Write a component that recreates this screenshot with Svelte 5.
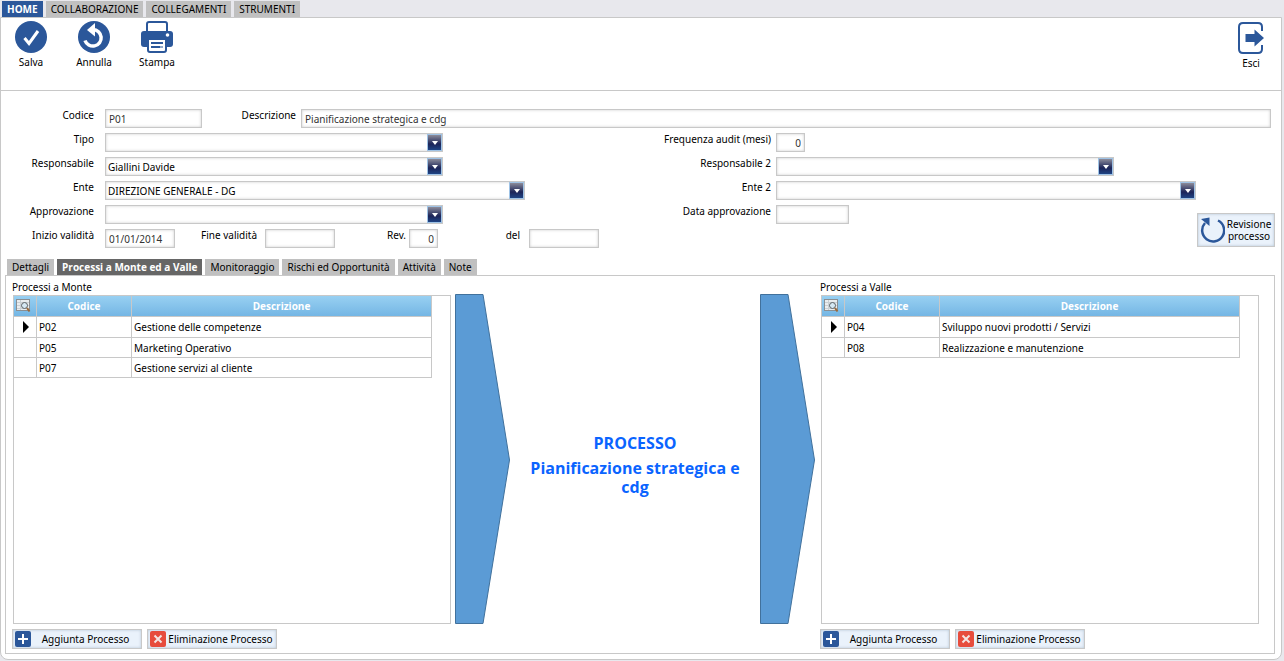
<script lang="ts">
	type Process = { code: string; description: string };

	const menu = ['HOME', 'COLLABORAZIONE', 'COLLEGAMENTI', 'STRUMENTI'];
	const tabs = ['Dettagli', 'Processi a Monte ed a Valle', 'Monitoraggio', 'Rischi ed Opportunità', 'Attività', 'Note'];

	const upstream: Process[] = [
		{ code: 'P02', description: 'Gestione delle competenze' },
		{ code: 'P05', description: 'Marketing Operativo' },
		{ code: 'P07', description: 'Gestione servizi al cliente' }
	];
	const downstream: Process[] = [
		{ code: 'P04', description: 'Sviluppo nuovi prodotti / Servizi' },
		{ code: 'P08', description: 'Realizzazione e manutenzione' }
	];

	let activeMenu = $state('HOME');
	let activeTab = $state('Processi a Monte ed a Valle');
	let description = $state('Pianificazione strategica e cdg');
</script>

{#snippet combo(id: string, value: string, wide: boolean)}
	<div class="combo" class:wide>
		<select {id}>
			<option>{value}</option>
		</select>
		<span class="combo-arrow"></span>
	</div>
{/snippet}

{#snippet arrow()}
	<div class="arrow">
		<svg viewBox="0 0 55 330" preserveAspectRatio="none" aria-hidden="true">
			<polygon points="0.5,0.5 28,0.5 54.5,166 28,329.5 0.5,329.5" fill="#5b9bd5" stroke="#41719c" vector-effect="non-scaling-stroke" />
		</svg>
	</div>
{/snippet}

{#snippet processList(title: string, rows: Process[])}
	<h2>{title}</h2>
	<div class="grid-box">
		<table>
			<thead>
				<tr>
					<th class="col-mark">
						<button class="search" aria-label="Cerca">
							<svg width="15" height="14" viewBox="0 0 15 14">
								<rect x="0.5" y="0.5" width="13" height="11" fill="#e9edef" stroke="#8a8f93" />
								<path d="M1 3.5h12M1 6.5h12M1 9.5h12M4.5 1v10" stroke="#c9d0d4" fill="none" />
								<circle cx="8.5" cy="6.5" r="3" fill="#d5e8f3" stroke="#5b6165" />
								<path d="M11 9l2.5 3.5" stroke="#9a6a3c" stroke-width="2" />
							</svg>
						</button>
					</th>
					<th class="col-code">Codice</th>
					<th>Descrizione</th>
				</tr>
			</thead>
			<tbody>
				{#each rows as row, i (row.code)}
					<tr>
						<td class="mark">
							{#if i === 0}
								<svg width="6" height="12" viewBox="0 0 6 12"><path d="M0 0l6 6-6 6z" /></svg>
							{/if}
						</td>
						<td>{row.code}</td>
						<td>{row.description}</td>
					</tr>
				{/each}
			</tbody>
		</table>
	</div>
	<div class="actions">
		<button class="push">
			<svg width="16" height="16" viewBox="0 0 16 16">
				<rect width="16" height="16" rx="2" fill="#2b579a" />
				<path d="M8 3v10M3 8h10" stroke="#fff" stroke-width="2" />
			</svg>
			<span>Aggiunta Processo</span>
		</button>
		<button class="push">
			<svg width="16" height="16" viewBox="0 0 16 16">
				<rect width="16" height="16" rx="2" fill="#e74c3c" />
				<path d="M4.5 4.5l7 7M11.5 4.5l-7 7" stroke="#f4e4e2" stroke-width="2" />
			</svg>
			<span>Eliminazione Processo</span>
		</button>
	</div>
{/snippet}

<div class="page">
	<nav class="menu">
		{#each menu as item (item)}
			<button class:active={item === activeMenu} onclick={() => (activeMenu = item)}>{item}</button>
		{/each}
	</nav>

	<main>
		<div class="toolbar">
			<button>
				<svg width="32" height="32" viewBox="0 0 32 32">
					<circle cx="16" cy="16" r="16" fill="#2b579a" />
					<path d="M9.5 17l4.5 5.5L23 10" fill="none" stroke="#fff" stroke-width="3" />
				</svg>
				Salva
			</button>
			<button>
				<svg width="32" height="32" viewBox="0 0 32 32">
					<circle cx="16" cy="16" r="16" fill="#2b579a" />
					<path d="M15 8.5a8.3 8.3 0 1 1-8 11" fill="none" stroke="#fff" stroke-width="3.5" />
					<path d="M9 9l8-7v13.5z" fill="#fff" />
				</svg>
				Annulla
			</button>
			<button>
				<svg width="32" height="32" viewBox="0 0 32 32">
					<path d="M6 12V3q0-2 2-2h16q2 0 2 2v9" fill="#fff" stroke="#2b579a" stroke-width="2" />
					<rect y="10" width="32" height="16" rx="3" fill="#2b579a" />
					<circle cx="26.5" cy="14" r="1.8" fill="#fff" />
					<path d="M7 18h18v11q0 2-2 2H9q-2 0-2-2z" fill="#fff" stroke="#2b579a" stroke-width="2" />
					<path d="M10 22h12" stroke="#2b579a" stroke-width="2" />
					<path d="M10 26h9" stroke="#2b579a" stroke-width="2" />
					<path d="M19 26h3" stroke="#8fa9cc" stroke-width="2" />
				</svg>
				Stampa
			</button>
			<button class="exit">
				<svg width="28" height="32" viewBox="0 0 28 32">
					<path d="M25 9V5q0-4-4-4H6q-4 0-4 4v22q0 4 4 4h15q4 0 4-4v-4" fill="none" stroke="#2b579a" stroke-width="2" />
					<path d="M8.5 12h9V7.5l9.500 8.500-9.500 8.500V20h-9z" fill="#2b579a" />
				</svg>
				Esci
			</button>
		</div>

		<form class="details" onsubmit={(e) => e.preventDefault()}>
			<div class="row full">
				<label for="code">Codice</label>
				<input id="code" class="w-code" value="P01" />
				<label for="description" class="l-desc">Descrizione</label>
				<input id="description" class="w-fill" bind:value={description} />
			</div>

			<div class="row">
				<label for="type">Tipo</label>
				{@render combo('type', '', false)}
			</div>
			<div class="row right">
				<label for="frequency">Frequenza audit (mesi)</label>
				<input id="frequency" class="w-number" value="0" />
			</div>

			<div class="row">
				<label for="owner">Responsabile</label>
				{@render combo('owner', 'Giallini Davide', false)}
			</div>
			<div class="row right">
				<label for="owner2">Responsabile 2</label>
				{@render combo('owner2', '', false)}
			</div>

			<div class="row">
				<label for="unit">Ente</label>
				{@render combo('unit', 'DIREZIONE GENERALE - DG', true)}
			</div>
			<div class="row right">
				<label for="unit2">Ente 2</label>
				{@render combo('unit2', '', true)}
			</div>

			<div class="row">
				<label for="approval">Approvazione</label>
				{@render combo('approval', '', false)}
			</div>
			<div class="row right approved">
				<label for="approval-date">Data approvazione</label>
				<input id="approval-date" class="w-approval" />
			</div>

			<div class="row">
				<label for="valid-from">Inizio validità</label>
				<input id="valid-from" class="w-date" value="01/01/2014" />
				<label for="valid-to" class="l-to">Fine validità</label>
				<input id="valid-to" class="w-date" />
				<label for="revision" class="l-rev">Rev.</label>
				<input id="revision" class="w-number" value="0" />
				<label for="revision-date" class="l-of">del</label>
				<input id="revision-date" class="w-date" />
			</div>

			<button class="push revise">
				<svg width="25" height="26" viewBox="0 0 25 26">
					<path d="M5 6a11 11 0 1 0 13-2.500" fill="none" stroke="#2b579a" stroke-width="2.5" />
					<path d="M1 2l8.5-1.5V9z" fill="#2b579a" />
				</svg>
				<span>Revisione processo</span>
			</button>
		</form>

		<div class="tabs" role="tablist">
			{#each tabs as tab (tab)}
				<button role="tab" aria-selected={tab === activeTab} class:active={tab === activeTab} onclick={() => (activeTab = tab)}>{tab}</button>
			{/each}
		</div>

		<div class="tab-panel" role="tabpanel">
			<section class="before">{@render processList('Processi a Monte', upstream)}</section>
			{@render arrow()}
			<div class="process">
				<p>PROCESSO</p>
				<p>{description}</p>
			</div>
			{@render arrow()}
			<section class="after">{@render processList('Processi a Valle', downstream)}</section>
		</div>
	</main>
</div>

<style>
	:global(body) {
		margin: 0;
		background: #e8e8ed;
	}

	.page {
		display: flex;
		flex-direction: column;
		box-sizing: border-box;
		min-height: 100vh;
		padding: 1px 2px 1px 0;
		font-family: "Noto Sans", sans-serif;
		font-size: 10px;
		line-height: 14px;
		color: #000;
	}

	button,
	input,
	select {
		box-sizing: border-box;
		margin: 0;
		font: inherit;
		color: inherit;
	}

	button {
		padding: 0;
		border: none;
		background: none;
		cursor: pointer;
	}

	svg {
		display: block;
		flex: none;
	}

	/* Menu and tabs */
	.menu,
	.tabs {
		display: flex;
		gap: 3px;
	}

	.menu {
		padding-left: 2px;
	}

	.menu button,
	.tabs button {
		height: 16px;
		padding: 0 5px;
		background: #c0c0c0;
	}

	.menu button.active {
		background: #2b579a;
		color: #fff;
		font-family: "Open Sans", sans-serif;
		font-weight: 700;
	}

	.tabs {
		padding: 11px 6px 0;
	}

	.tabs button.active {
		background: #666;
		color: #fff;
		font-family: "Open Sans", sans-serif;
		font-weight: 700;
	}

	main {
		display: flex;
		flex: 1;
		flex-direction: column;
		border: 1px solid #c8c8c8;
		border-radius: 0 0 8px 8px;
		background: #fff;
	}

	.toolbar {
		display: flex;
		gap: 3px;
		align-items: flex-start;
		height: 69px;
		padding-top: 3px;
		border-bottom: 1px solid #c8c8c8;
	}

	.toolbar button {
		display: flex;
		flex-direction: column;
		gap: 2px;
		align-items: center;
		width: 60px;
	}

	.toolbar .exit {
		margin-left: auto;
		padding-top: 1px;
	}

	/* Process details */
	.details {
		display: grid;
		grid-template-columns: 1fr 1fr;
		row-gap: 5px;
		padding-top: 18px;
	}

	.row {
		display: flex;
		align-items: flex-start;
		height: 19px;
	}

	.full {
		grid-column: 1 / 3;
		padding-right: 10px;
	}

	.approved {
		grid-row: 5;
		grid-column: 2;
	}

	label {
		flex: none;
		width: 93px;
		margin-right: 11px;
		line-height: 13px;
		text-align: right;
		white-space: nowrap;
	}

	.right label {
		width: 130px;
		margin-right: 5px;
	}

	label.l-desc {
		width: 94px;
		margin-right: 5px;
	}

	label.l-to {
		width: 82px;
		margin-right: 8px;
	}

	label.l-rev {
		width: 71px;
		margin-right: 3px;
	}

	label.l-of {
		width: 82px;
		margin-right: 9px;
	}

	input,
	select {
		height: 19px;
		border: 1px solid #c8c8c8;
		border-radius: 0;
		background: #fff;
		box-shadow: inset 0 0 3px #ccc;
		outline: none;
	}

	input {
		padding: 1px 3px 0;
		color: #333;
	}

	.w-code {
		width: 97px;
	}

	.w-fill {
		flex: 1;
	}

	.w-date {
		width: 70px;
	}

	.w-approval {
		width: 73px;
	}

	.w-number {
		width: 29px;
		text-align: right;
	}

	.combo {
		display: grid;
		width: 338px;
	}

	.combo.wide {
		width: 420px;
	}

	.combo select {
		grid-area: 1 / 1;
		padding: 0 2px;
		appearance: none;
	}

	.combo-arrow {
		display: grid;
		grid-area: 1 / 1;
		place-content: center;
		justify-self: end;
		box-sizing: border-box;
		width: 15px;
		height: 17px;
		margin: 1px;
		border: 1px solid #9fc3e6;
		background: linear-gradient(#8c8c9a, #1c2458 60%, #1f4484);
		pointer-events: none;
	}

	.combo-arrow::before {
		content: "";
		border: 3px solid transparent;
		border-top: 4px solid #fff;
		border-bottom: none;
	}

	.push {
		display: flex;
		align-items: center;
		width: 130px;
		height: 20px;
		padding: 0 1px 0 2px;
		border: 1px solid #c8c8c8;
		background: #eaf2fb;
		box-shadow: inset 0 0 3px #b4c4d4;
	}

	.push span {
		flex: 1;
		text-align: center;
		white-space: nowrap;
	}

	.revise {
		grid-row: 5 / 7;
		grid-column: 2;
		align-self: end;
		justify-self: end;
		width: 78px;
		height: 34px;
		margin: 0 6px 1px 0;
		line-height: 12px;
	}

	.revise span {
		white-space: normal;
	}

	/* Upstream and downstream processes */
	.tab-panel {
		display: grid;
		flex: 1;
		grid-template-columns: 443fr 55px 250fr 55px 444fr;
		margin: 0 6px 5px 4px;
		padding: 4px 15px 4px 6px;
		border: 1px solid #c8c8c8;
	}

	section {
		display: flex;
		flex-direction: column;
	}

	.before {
		padding-right: 4px;
	}

	.after {
		padding-left: 5px;
	}

	h2 {
		margin: 0;
		font-size: 10px;
		font-weight: 400;
		line-height: 15px;
	}

	.grid-box {
		flex: 1;
		margin-left: 1px;
		padding-right: 18px;
		border: 1px solid #c8c8c8;
	}

	table {
		width: 100%;
		border-collapse: separate;
		border-spacing: 0;
		table-layout: fixed;
	}

	th,
	td {
		box-sizing: border-box;
		height: 20px;
		padding: 0 2px;
		border-right: 1px solid #c8c8c8;
		border-bottom: 1px solid #c8c8c8;
		text-align: left;
	}

	th,
	tbody tr:first-child td {
		height: 21px;
	}

	th {
		background: linear-gradient(#98d0f2, #74b6e4);
		color: #fff;
		font-family: "Open Sans", sans-serif;
		text-align: center;
	}

	.col-mark {
		width: 23px;
	}

	.col-code {
		width: 95px;
	}

	.search {
		display: block;
	}

	.mark svg {
		margin-left: 7px;
	}

	.actions {
		display: flex;
		gap: 5px;
		margin-top: 5px;
	}

	.arrow {
		display: flex;
		flex-direction: column;
		padding: 14px 0 25px;
	}

	.arrow svg {
		flex: 1;
		width: 100%;
		height: 0;
	}

	.process {
		display: flex;
		flex-direction: column;
		gap: 6px;
		justify-content: center;
		padding: 2px 15px 0;
		color: #0a64ff;
		font-family: "Open Sans", sans-serif;
		font-size: 16px;
		font-weight: 700;
		line-height: 19px;
		text-align: center;
	}

	.process p {
		margin: 0;
	}
</style>
